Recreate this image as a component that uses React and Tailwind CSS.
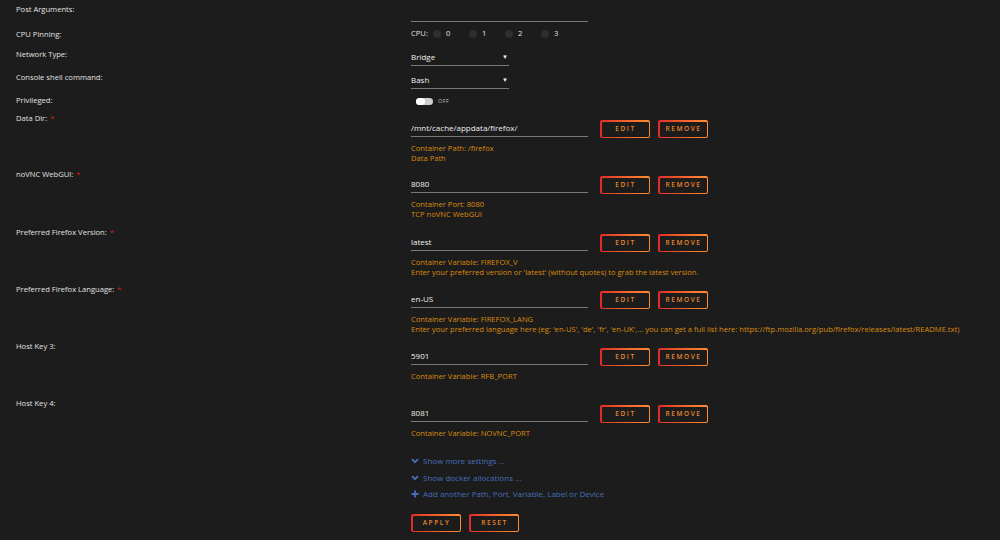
import React from "react";

const font = { fontFamily: '"Open Sans", "Noto Sans", sans-serif' };

function Btn({ children, w = "w-[50px]" }) {
  return (
    <div className={`${w} h-[18px] p-[1.5px] rounded-[2px] bg-linear-to-r from-[#e22828] to-[#ff8c2f]`}>
      <div className="w-full h-full rounded-[1px] bg-[#1c1c1c] flex items-center justify-center text-[6.5px] font-semibold tracking-[1.6px] text-[#ec862c] leading-none pl-[1px]">
        {children}
      </div>
    </div>
  );
}

function Label({ children, req, pt = "pt-0" }) {
  return (
    <div className={`w-[411px] pl-4 shrink-0 ${pt} text-[7.6px] leading-[10px] text-[#e2e2e2]`}>
      {children}
      {req && <span className="text-[#d42020] ml-[3px]">*</span>}
    </div>
  );
}

function ConfigRow({ label, req, value, descs, h }) {
  return (
    <div className={`flex ${h}`}>
      <Label req={req}>{label}</Label>
      <div className="flex flex-col pt-[7px]">
        <div className="flex items-start">
          <div className="w-[177px] h-[17px] border-b-[1.5px] border-[#7a7a7a] text-[8px] leading-[15px] text-[#efefef]">
            {value}
          </div>
          <div className="ml-[12px] flex gap-2">
            <Btn>EDIT</Btn>
            <Btn>REMOVE</Btn>
          </div>
        </div>
        <div className="mt-[5px] flex flex-col">
          {descs.map((d, i) => (
            <div key={i} className="text-[7.6px] leading-[10px] text-[#d98b0c] whitespace-nowrap">
              {d}
            </div>
          ))}
        </div>
      </div>
    </div>
  );
}

function Radio({ n }) {
  return (
    <div className="flex items-center w-[36px]">
      <div className="w-[8px] h-[8px] rounded-full bg-[#2f2f2f]" />
      <span className="ml-[5px] text-[7.6px] text-[#e2e2e2]">{n}</span>
    </div>
  );
}

function Select({ value }) {
  return (
    <div className="w-[98px] h-[18px] border-b-[1.5px] border-[#7a7a7a] flex items-center justify-between text-[8px] text-[#efefef] pt-[1px]">
      <span>{value}</span>
      <span className="text-[6px] mr-[1px]">▼</span>
    </div>
  );
}

function Chevron() {
  return (
    <svg width="8" height="6" viewBox="0 0 8 6" className="mr-[4px]">
      <path d="M1 1.2 L4 4.2 L7 1.2" stroke="#486dba" strokeWidth="1.8" fill="none" />
    </svg>
  );
}

function Plus() {
  return (
    <svg width="8" height="8" viewBox="0 0 8 8" className="mr-[4px]">
      <path d="M4 0.5 V7.5 M0.5 4 H7.5" stroke="#486dba" strokeWidth="1.8" fill="none" />
    </svg>
  );
}

export default function App() {
  return (
    <div className="w-[1000px] h-[540px] bg-[#1c1c1c] overflow-hidden" style={font}>
      {/* Post Arguments */}
      <div className="flex h-[24px]">
        <Label pt="pt-[4px]">Post Arguments:</Label>
        <div className="w-[177px] h-[22px] border-b-[1.5px] border-[#7a7a7a]" />
      </div>
      {/* CPU pinning */}
      <div className="flex h-[20px] items-center">
        <Label>CPU Pinning:</Label>
        <div className="flex items-center text-[7.6px] text-[#e2e2e2]">
          <span className="mr-[5px]">CPU:</span>
          <Radio n="0" />
          <Radio n="1" />
          <Radio n="2" />
          <Radio n="3" />
        </div>
      </div>
      {/* Network Type */}
      <div className="flex h-[24px]">
        <Label pt="pt-[5px]">Network Type:</Label>
        <div className="pt-[4px]">
          <Select value="Bridge" />
        </div>
      </div>
      {/* Console */}
      <div className="flex h-[24px]">
        <Label pt="pt-[4px]">Console shell command:</Label>
        <div className="pt-[3px]">
          <Select value="Bash" />
        </div>
      </div>
      {/* Privileged */}
      <div className="flex h-[21px]">
        <Label pt="pt-[3px]">Privileged:</Label>
        <div className="pt-[3px] pl-[5px] flex items-center h-[12px] mt-[2px]">
          <div className="w-[17px] h-[7px] rounded-full bg-[#cfcfcf] relative">
            <div className="absolute left-0 top-0 w-[9px] h-[7px] rounded-full bg-white" />
          </div>
          <span className="ml-[5px] text-[5.5px] tracking-[0.5px] text-[#bdbdbd]">OFF</span>
        </div>
      </div>

      <ConfigRow h="h-[56px]" label="Data Dir:" req value="/mnt/cache/appdata/firefox/" descs={["Container Path: /firefox", "Data Path"]} />
      <ConfigRow h="h-[58px]" label="noVNC WebGUI:" req value="8080" descs={["Container Port: 8080", "TCP noVNC WebGUI"]} />
      <ConfigRow h="h-[57px]" label="Preferred Firefox Version:" req value="latest" descs={["Container Variable: FIREFOX_V", "Enter your preferred version or 'latest' (without quotes) to grab the latest version."]} />
      <ConfigRow h="h-[57px]" label="Preferred Firefox Language:" req value="en-US" descs={["Container Variable: FIREFOX_LANG", "Enter your preferred language here (eg: 'en-US', 'de', 'fr', 'en-UK',... you can get a full list here: https://ftp.mozilla.org/pub/firefox/releases/latest/README.txt)"]} />
      <ConfigRow h="h-[57px]" label="Host Key 3:" value="5901" descs={["Container Variable: RFB_PORT"]} />
      <ConfigRow h="h-[54px]" label="Host Key 4:" value="8081" descs={["Container Variable: NOVNC_PORT"]} />

      <div className="pl-[411px] flex flex-col text-[8px] text-[#486dba]">
        <div className="h-[17px] flex items-center"><Chevron />Show more settings ...</div>
        <div className="h-[17px] flex items-center"><Chevron />Show docker allocations ...</div>
        <div className="h-[16px] flex items-center"><Plus />Add another Path, Port, Variable, Label or Device</div>
        <div className="flex gap-2 mt-[12px]">
          <Btn>APPLY</Btn>
          <Btn>RESET</Btn>
        </div>
      </div>
    </div>
  );
}
